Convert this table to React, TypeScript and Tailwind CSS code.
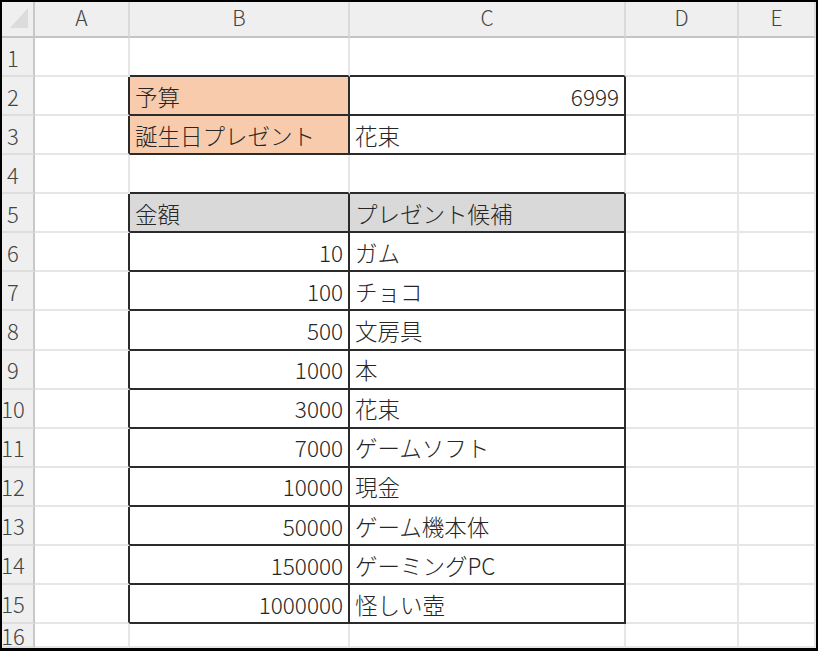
const COLS = ['A', 'B', 'C', 'D', 'E'];
const ROW_COUNT = 16;

type Cell = { text: string; right?: boolean; fill?: string };

const ORANGE = 'bg-[#f8cbad]';
const GRAY = 'bg-[#d9d9d9]';

const ITEMS: [string, string][] = [
  ['10', 'ガム'],
  ['100', 'チョコ'],
  ['500', '文房具'],
  ['1000', '本'],
  ['3000', '花束'],
  ['7000', 'ゲームソフト'],
  ['10000', '現金'],
  ['50000', 'ゲーム機本体'],
  ['150000', 'ゲーミングPC'],
  ['1000000', '怪しい壺'],
];

const cells: Record<string, Cell> = {
  B2: { text: '予算', fill: ORANGE },
  C2: { text: '6999', right: true },
  B3: { text: '誕生日プレゼント', fill: ORANGE },
  C3: { text: '花束' },
  B5: { text: '金額', fill: GRAY },
  C5: { text: 'プレゼント候補', fill: GRAY },
};
ITEMS.forEach(([amount, name], i) => {
  cells[`B${i + 6}`] = { text: amount, right: true };
  cells[`C${i + 6}`] = { text: name };
});

// boxed ranges: B2:C3 and B5:C15 (col 2 = B, col 3 = C)
function inTable(r: number, c: number) {
  return ((r >= 2 && r <= 3) || (r >= 5 && r <= 15)) && c >= 2 && c <= 3;
}

function SheetCell({ r, c }: { r: number; c: number }) {
  const key = `${COLS[c - 1]}${r}`;
  const cell = cells[key];
  const darkRight = inTable(r, c) || inTable(r, c + 1);
  const darkBottom = inTable(r, c) || inTable(r + 1, c);
  return (
    <div
      className={[
        'flex items-center overflow-hidden whitespace-nowrap border-r-2 border-b-2 px-[5px] pt-[1px]',
        darkRight ? 'border-r-[#2b2b2b]' : 'border-r-[#e6e6e6]',
        darkBottom ? 'border-b-[#2b2b2b]' : 'border-b-[#e6e6e6]',
        cell?.right ? 'justify-end' : 'justify-start',
        cell?.fill ?? 'bg-white',
      ].join(' ')}
    >
      {cell?.text}
    </div>
  );
}

export default function App() {
  return (
    <div className="h-[651px] w-[818px] border-t-2 border-r-2 border-l-2 border-b-[3px] border-black bg-white">
      <div className="grid h-full w-full grid-cols-[33px_95px_220px_276px_113px_77px] grid-rows-[36px_repeat(15,39.07px)_1fr] overflow-hidden font-['Noto_Sans_CJK_JP',sans-serif] text-[22.5px] font-light leading-none text-[#262626]">
        {/* select-all corner */}
        <div className="relative border-r-2 border-b-2 border-r-[#c8c8c8] border-b-[#c4c4c4] bg-[#efefef]">
          <svg width="31" height="34" className="absolute left-0 top-0" aria-hidden="true">
            <polygon points="26,6 26,26 8,26" fill="#dcdcdc" />
          </svg>
        </div>
        {COLS.map((col) => (
          <div
            key={col}
            className="flex items-center justify-center border-r-2 border-b-2 border-r-[#dadada] border-b-[#c4c4c4] bg-[#efefef] pb-[3px] text-[21px] text-[#444]"
          >
            {col}
          </div>
        ))}

        {Array.from({ length: ROW_COUNT }, (_, i) => i + 1).map((r) => (
          <div key={r} className="contents">
            <div className="flex items-center justify-center overflow-hidden border-r-2 border-b-2 border-r-[#c8c8c8] border-b-[#dedede] bg-[#efefef] pr-[9px] text-[22px] text-[#444]">
              {r}
            </div>
            {COLS.map((_, ci) => (
              <SheetCell key={ci} r={r} c={ci + 1} />
            ))}
          </div>
        ))}
      </div>
    </div>
  );
}
